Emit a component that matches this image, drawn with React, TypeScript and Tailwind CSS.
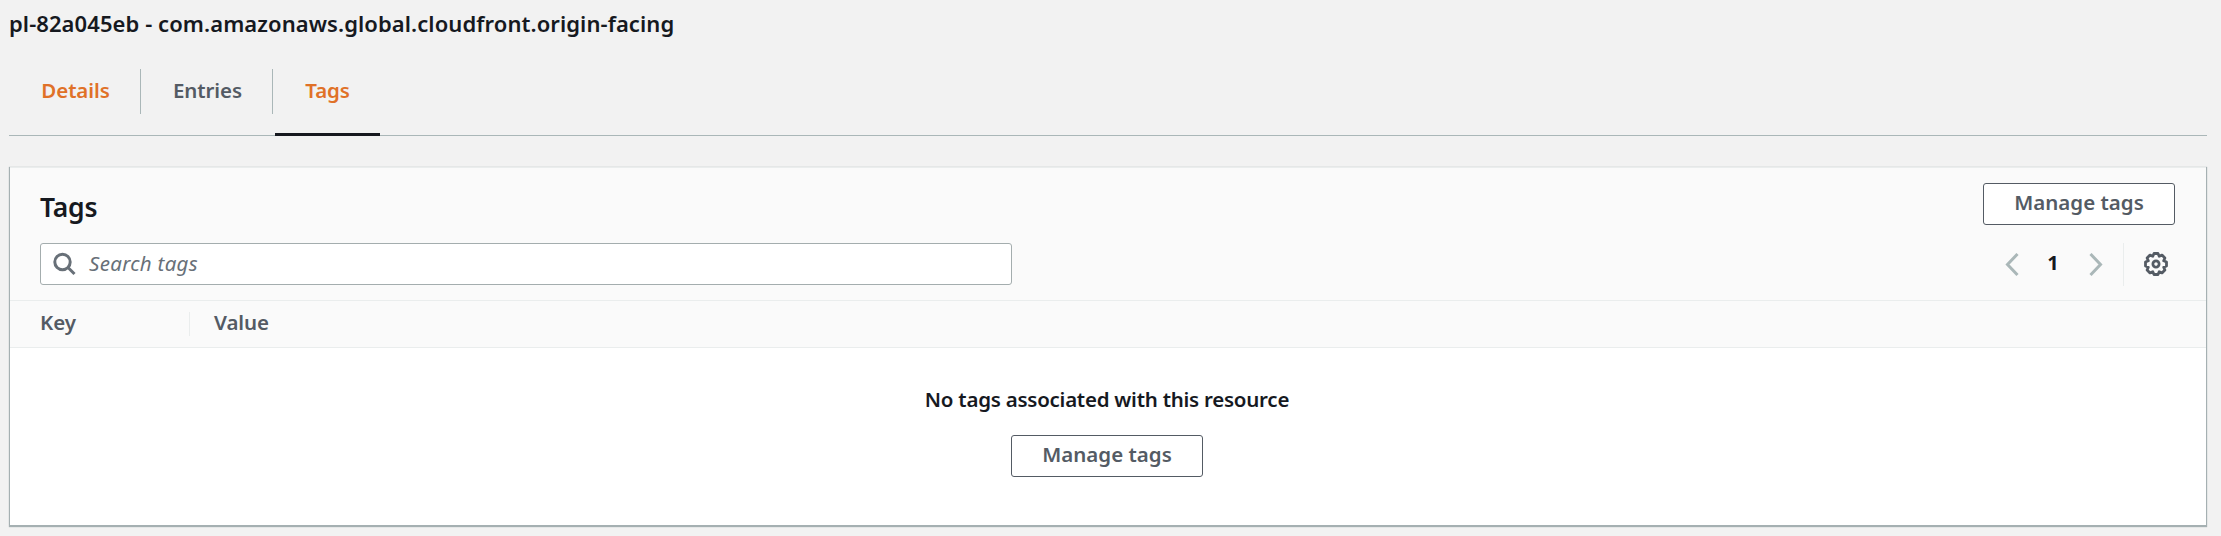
import type { ReactNode } from "react";

function ManageButton() {
  return (
    <button className="flex h-[42px] w-[192px] items-center justify-center rounded-[3px] border border-[#545b64] bg-white pb-[4px] text-[20.5px] leading-[30px] font-semibold whitespace-nowrap text-[#545b64]">
      Manage tags
    </button>
  );
}

function Tab({ width, className, children }: { width: string; className: string; children: ReactNode }) {
  return (
    <div className={`flex h-[67px] justify-center pt-[6px] text-[20.5px] leading-[30px] font-semibold tracking-[-0.1px] whitespace-nowrap ${width} ${className}`}>
      {children}
    </div>
  );
}

function Chevron({ flip = false }: { flip?: boolean }) {
  return (
    <svg width="14" height="24" viewBox="0 0 14 24" fill="none" stroke="#aab7b8" strokeWidth="3" className={flip ? "-scale-x-100" : ""}>
      <path d="M12.5 1 2.5 11.5l10 10.5" />
    </svg>
  );
}

export default function App() {
  return (
    <div className="h-[536px] w-[2221px] overflow-hidden bg-[#f2f2f2] pt-[8px] pr-[14px] pl-[9px] font-['Noto_Sans',sans-serif] text-[#16191f]">
      <h1 className="h-[61px] text-[22px] leading-[30px] font-semibold tracking-[0.08px] whitespace-nowrap">
        pl-82a045eb - com.amazonaws.global.cloudfront.origin-facing
      </h1>
      <nav className="flex h-[67px] border-b border-[#aab7b8]">
        <Tab width="w-[131px]" className="pl-[2px] text-[#e07128]">Details</Tab>
        <div className="h-[45px] w-px bg-[#aab7b8]" />
        <Tab width="w-[131px]" className="pl-[2px] text-[#545b64]">Entries</Tab>
        <div className="mr-[2px] h-[45px] w-px bg-[#aab7b8]" />
        <Tab width="w-[105px]" className="border-b-[3px] border-[#16191f] text-[#e07128]">Tags</Tab>
      </nav>

      <section className="mt-[31px] ml-px h-[358px] w-[2196px] bg-white shadow-[0_1px_1px_1px_#a5b0b2,0_1px_1px_0_#687078]">
        <header className="h-[134px] border-t border-b border-[#eaeded] bg-[#fafafa] pr-[31px] pl-[30px]">
          <div className="flex h-[75px] justify-between pt-[15px]">
            <h2 className="pt-[5px] text-[26.5px] leading-[38px] font-semibold tracking-[-0.2px]">Tags</h2>
            <ManageButton />
          </div>
          <div className="flex justify-between">
            <div className="flex h-[42px] w-[972px] items-center rounded-[3px] border border-[#a4adae] bg-white pl-[12px]">
              <svg width="24" height="24" viewBox="0 0 24 24" fill="none" stroke="#687078" strokeWidth="3">
                <circle cx="9.5" cy="10" r="7.7" />
                <path d="m15 15.5 6.5 6.5" />
              </svg>
              <span className="ml-[12px] pb-[2px] text-[20.5px] leading-[30px] tracking-[0.3px] text-[#687078] italic">Search tags</span>
            </div>
            <div className="flex h-[43px] items-center">
              <Chevron />
              <span className="w-[70px] pr-[2px] pb-[3px] text-center text-[20px] leading-[30px] font-bold">1</span>
              <Chevron flip />
              <div className="mr-[20px] ml-[20px] h-[43px] w-px bg-[#eaeded]" />
              <svg width="24" height="24" viewBox="-12 -12 24 24" fill="none" stroke="#545b64" strokeWidth="2.8" strokeLinejoin="round" className="mr-[7px] mb-[2px]">
                <path d="M10.5 2 7.7 3.2 8.9 6 6 8.9 3.2 7.7 2 10.5h-4L-3.2 7.7-6 8.9-8.9 6-7.7 3.2-10.5 2v-4L-7.7-3.2-8.9-6-6-8.9-3.2-7.7-2-10.5h4L3.2-7.7 6-8.9 8.9-6 7.7-3.2 10.5-2z" />
                <circle r="3.1" />
              </svg>
            </div>
          </div>
        </header>
        <div className="flex h-[47px] items-center border-b border-[#eaeded] bg-[#fafafa] text-[20.5px] leading-[30px] font-semibold tracking-[-0.1px] text-[#545b64]">
          <div className="w-[179px] pb-[4px] pl-[30px]">Key</div>
          <div className="h-[24px] w-px bg-[#eaeded]" />
          <div className="pb-[4px] pl-[24px]">Value</div>
        </div>
        <div className="flex flex-col items-center pt-[36px] pr-[2px]">
          <p className="text-[20.5px] leading-[30px] font-semibold tracking-[-0.25px] whitespace-nowrap">No tags associated with this resource</p>
          <div className="mt-[21px]">
            <ManageButton />
          </div>
        </div>
      </section>
    </div>
  );
}
